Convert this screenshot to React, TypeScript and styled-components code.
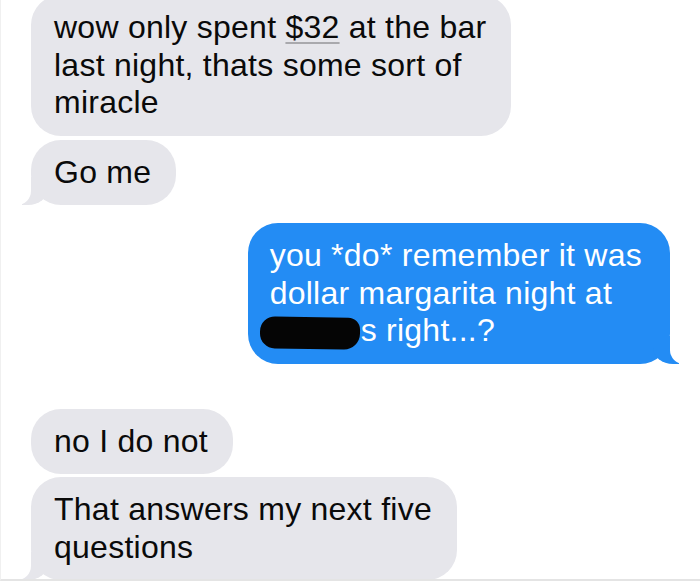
import React from "react";
import styled, { createGlobalStyle, css } from "styled-components";

const Global = createGlobalStyle`
  html, body { margin: 0; padding: 0; background: #ffffff; }
  body { font-family: "Liberation Sans", Arial, Helvetica, sans-serif; }
`;

const Screen = styled.div`
  width: 700px;
  height: 581px;
  overflow: hidden;
  box-sizing: border-box;
  background: #ffffff;
  border-left: 1px solid #f0f0f0;
  border-bottom: 2px solid #e4e4e4;
`;

const Thread = styled.div`
  display: flex;
  flex-direction: column;
  padding: 0 20px 0 30px;
  margin-top: -5px;
`;

type Side = "them" | "me";

const Bubble = styled.div<{ $side: Side; $tail?: boolean; $gap: number }>`
  position: relative;
  box-sizing: border-box;
  margin-top: ${(p) => p.$gap}px;
  padding: 14px 25px 14px 23px;
  border-radius: 30px;
  font-size: 32px;
  line-height: 37.5px;
  letter-spacing: 0.25px;
  white-space: nowrap;
  ${(p) =>
    p.$side === "them"
      ? css`
          align-self: flex-start;
          background: #e6e6eb;
          color: #0a0a0a;
        `
      : css`
          align-self: flex-end;
          margin-right: 10px;
          padding: 14px 28px 14px 22px;
          background: #238cf4;
          color: #ffffff;
        `}
  ${(p) =>
    p.$tail &&
    (p.$side === "them"
      ? css`
          &::before {
            content: "";
            position: absolute;
            left: -9px;
            bottom: 0;
            width: 26px;
            height: 28px;
            background: #e6e6eb;
            border-bottom-right-radius: 20px 16px;
          }
          &::after {
            content: "";
            position: absolute;
            left: -30px;
            bottom: 0;
            width: 30px;
            height: 30px;
            background: #ffffff;
            border-bottom-right-radius: 14px;
          }
        `
      : css`
          &::before {
            content: "";
            position: absolute;
            right: -9px;
            bottom: 0;
            width: 26px;
            height: 28px;
            background: #238cf4;
            border-bottom-left-radius: 20px 16px;
          }
          &::after {
            content: "";
            position: absolute;
            right: -30px;
            bottom: 0;
            width: 30px;
            height: 30px;
            background: #ffffff;
            border-bottom-left-radius: 14px;
          }
        `)}
`;

const Line = styled.span`
  position: relative;
  z-index: 1;
  display: block;
`;

const Money = styled.span`
  text-decoration: underline;
  text-decoration-color: #a9a9ad;
  text-decoration-thickness: 2px;
  text-underline-offset: 4px;
`;

const Redacted = styled.span`
  display: inline-block;
  width: 100px;
  height: 32px;
  margin-left: -10px;
  margin-right: 1px;
  vertical-align: -8px;
  background: #050505;
  border-radius: 15px 12px 16px 15px;
  transform: rotate(1deg);
`;

export default function App() {
  return (
    <>
      <Global />
      <Screen>
        <Thread>
          <Bubble $side="them" $gap={0}>
            <Line>
              wow only spent <Money>$32</Money> at the bar
            </Line>
            <Line>last night, thats some sort of</Line>
            <Line>miracle</Line>
          </Bubble>
          <Bubble $side="them" $gap={4} $tail>
            <Line>Go me</Line>
          </Bubble>
          <Bubble $side="me" $gap={18} $tail>
            <Line>you *do* remember it was</Line>
            <Line>dollar margarita night at</Line>
            <Line>
              <Redacted />s right...?
            </Line>
          </Bubble>
          <Bubble $side="them" $gap={45}>
            <Line>no I do not</Line>
          </Bubble>
          <Bubble $side="them" $gap={3} $tail>
            <Line>That answers my next five</Line>
            <Line>questions</Line>
          </Bubble>
        </Thread>
      </Screen>
    </>
  );
}
